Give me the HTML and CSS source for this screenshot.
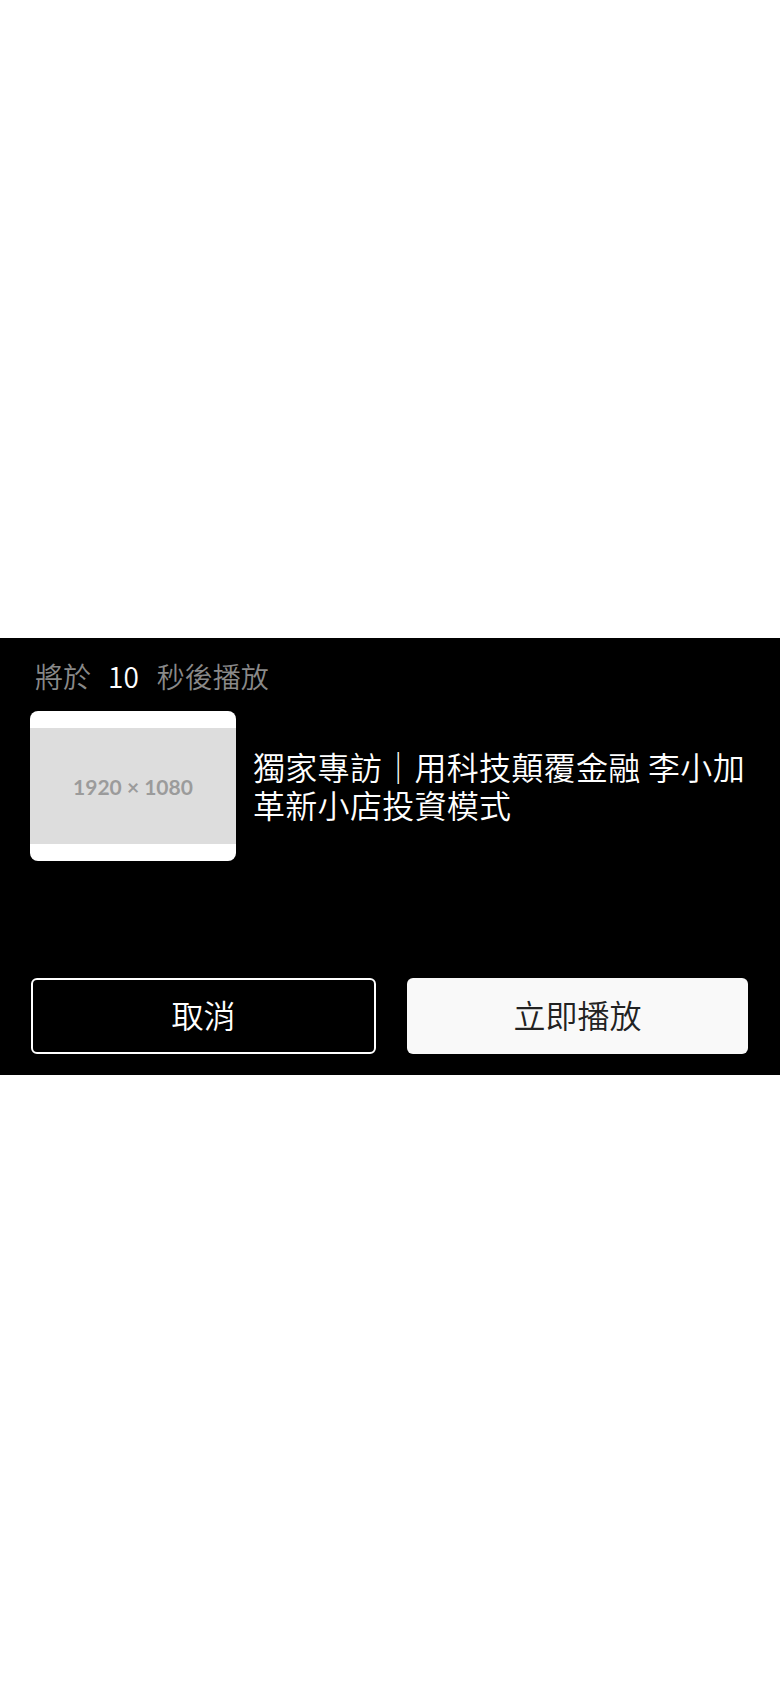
FILE: index.html
```html
<!DOCTYPE html>
<html lang="zh-Hant">
<head>
  <meta charset="UTF-8">
  <meta name="viewport" content="width=device-width, initial-scale=1.0">
  <title>下一部影片</title>
  <link rel="stylesheet" href="styles.css">
</head>
<body>
  <div class="stage">
    <!-- 自動播放下一部 -->
    <div class="up_next">
      <p class="countdown">將於<span class="sec">10</span>秒後播放</p>
      <div class="next_item">
        <div class="thumb">
          <div class="thumb_img">1920 × 1080</div>
        </div>
        <p class="next_title">獨家專訪｜用科技顛覆金融 李小加革新小店投資模式</p>
      </div>
      <div class="actions">
        <button class="btn btn_cancel">取消</button>
        <button class="btn btn_play">立即播放</button>
      </div>
    </div>
  </div>
</body>
</html>
```

FILE: styles.css
```css
*{
  margin: 0;
  padding: 0;
  box-sizing: border-box;
}
body{
  width: 780px;
  height: 1688px;
  background-color: #fff;
  font-family: "Noto Sans CJK TC", "Noto Sans", sans-serif;
  font-weight: 350;
}
.stage{
  padding-top: 638px;
}
.up_next{
  padding: 18px 30px 21px;
  background-color: #000;
  color: #fff;
}
.countdown{
  padding-left: 5px;
  height: 40px;
  line-height: 40px;
  font-size: 28px;
  color: #898989;
}
.countdown .sec{
  margin: 0 18px 0 17px;
  color: #fff;
}
.next_item{
  display: flex;
  align-items: center;
  gap: 17px;
  margin-top: 15px;
}
.thumb{
  flex: none;
  display: flex;
  align-items: center;
  width: 206px;
  height: 150px;
  background-color: #fff;
  border-radius: 8px;
  overflow: hidden;
}
.thumb_img{
  display: flex;
  align-items: center;
  justify-content: center;
  width: 100%;
  height: 116px;
  background-color: #ddd;
  color: #9b9b9b;
  font-family: Lato, "Noto Sans", sans-serif;
  font-weight: 700;
  font-size: 21px;
}
.next_title{
  flex: 1;
  margin-top: -3px;
  font-size: 32px;
  line-height: 38px;
  letter-spacing: 0.3px;
  color: #fff;
}
/* 按鈕 */
.actions{
  display: flex;
  gap: 31px;
  margin-top: 117px;
  padding: 0 2px 0 1px;
}
.btn{
  flex: 1;
  height: 76px;
  padding-bottom: 5px;
  border-radius: 6px;
  font-family: "Noto Sans CJK TC", sans-serif;
  font-weight: 350;
  font-size: 32px;
  outline: none;
}
.btn_cancel{
  background-color: #000;
  border: 2px solid #fff;
  color: #fff;
}
.btn_play{
  background-color: #f9f9f9;
  border: 0;
  color: #222;
}
```
